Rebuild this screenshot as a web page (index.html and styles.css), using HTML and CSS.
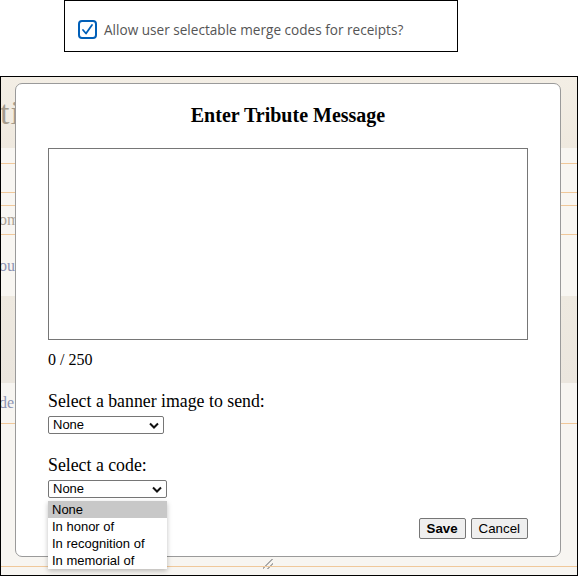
FILE: index.html
```html
<!DOCTYPE html>
<html>
<head>
<meta charset="utf-8">
<link rel="stylesheet" href="styles.css">
</head>
<body>
<div class="setting">
  <label class="setting-label">
    <span class="check">
      <svg width="19" height="19" viewBox="0 0 19 19"><rect x="1" y="1" width="17" height="17" rx="3" ry="3" fill="#fff" stroke="#005fb8" stroke-width="2"/><path d="M5 10 L8 13.5 L14 5" fill="none" stroke="#005fb8" stroke-width="1.8" stroke-linecap="round" stroke-linejoin="round"/></svg>
    </span>
    <span class="setting-text">Allow user selectable merge codes for receipts?</span>
  </label>
</div>

<div class="frame">
  <div class="page">
    <div class="band band-head"><span class="page-title">ti</span></div>
    <div class="band band-light">
      <div class="row r1"></div>
      <div class="row r2"></div>
      <div class="row r3"></div>
      <div class="row r4"><span class="ghost">om</span></div>
      <div class="row r5"><span class="ghost blue">out</span></div>
    </div>
    <div class="band band-mid"></div>
    <div class="band band-light2">
      <div class="row r6"><span class="ghost blue">de</span></div>
      <div class="spacer"></div>
      <div class="resizer"></div>
      <div class="row r7"></div>
    </div>
  </div>

  <div class="modal">
    <h2 class="modal-title">Enter Tribute Message</h2>
    <textarea class="message"></textarea>
    <div class="counter">0 / 250</div>
    <div class="field">
      <div class="field-label">Select a banner image to send:</div>
      <div class="select sel-banner">None<span class="chev"><svg width="10" height="7" viewBox="0 0 10 7"><path d="M1 1.5 L5 5.5 L9 1.5" fill="none" stroke="#111" stroke-width="2"/></svg></span></div>
    </div>
    <div class="field">
      <div class="field-label">Select a code:</div>
      <div class="select sel-code">None<span class="chev"><svg width="10" height="7" viewBox="0 0 10 7"><path d="M1 1.5 L5 5.5 L9 1.5" fill="none" stroke="#111" stroke-width="2"/></svg></span></div>
    </div>
    <div class="actions">
      <button class="btn btn-save">Save</button>
      <button class="btn">Cancel</button>
    </div>
    <ul class="dropdown">
      <li class="opt active">None</li>
      <li class="opt">In honor of</li>
      <li class="opt">In recognition of</li>
      <li class="opt">In memorial of</li>
    </ul>
  </div>
</div>
</body>
</html>
```

FILE: styles.css
```css
html, body {
  margin: 0;
  padding: 0;
  background: #fff;
}

.setting {
  margin-left: 64px;
  width: 379px;
  height: 50px;
  border: 1px solid #000;
  display: flex;
  align-items: center;
  padding-left: 13px;
  box-sizing: content-box;
}

.setting-label {
  display: flex;
  align-items: center;
  gap: 7px;
  padding-top: 7px;
}

.check {
  display: flex;
  width: 19px;
  height: 19px;
}

.setting-text {
  font-family: "Open Sans", "Noto Sans", sans-serif;
  font-size: 13.6px;
  color: #555;
}

.frame {
  position: relative;
  margin-top: 24px;
  width: 576px;
  height: 498px;
  border: 1px solid #000;
  overflow: hidden;
  background: #f7f4ef;
  font-family: "Liberation Serif", serif;
}

.page {
  display: flex;
  flex-direction: column;
  height: 100%;
}

.band-head {
  height: 71px;
  background: linear-gradient(180deg, #f3eee5 0%, #efe9df 100%);
  display: flex;
  align-items: center;
}

.page-title {
  font-size: 34px;
  color: #a59b8c;
  margin-left: -1px;
  letter-spacing: 1px;
}

.band-light {
  background: #f8f6f2;
  display: flex;
  flex-direction: column;
}

.row {
  border-bottom: 1px solid #f0c89a;
  display: flex;
  align-items: center;
}

.r1 { height: 15px; }
.r2 { height: 28px; }
.r3 { height: 12px; }
.r4 { height: 28px; }
.r5 { height: 61px; border-bottom: none; }

.ghost {
  font-size: 16px;
  color: #aaa297;
  margin-left: -2px;
}

.ghost.blue { color: #8b93b3; }

.band-mid {
  height: 87px;
  background: linear-gradient(180deg, #eee9e0 0%, #ebe6de 100%);
}

.band-light2 {
  background: #f7f5f1;
  display: flex;
  flex-direction: column;
  flex: 1;
}

.r6 { height: 40px; }
.spacer { flex: 1; }
.r7 { height: 0; margin-bottom: 8px; }

.resizer {
  width: 10px;
  height: 10px;
  margin-left: 262px;
  margin-bottom: -3px;
  background: linear-gradient(135deg, transparent 45%, #aaa 45%, #aaa 52%, transparent 52%, transparent 70%, #aaa 70%, #aaa 77%, transparent 77%);
}

.modal {
  position: absolute;
  left: 14px;
  top: 6px;
  width: 546px;
  height: 474px;
  background: #fff;
  border: 1px solid #9a9a9a;
  border-radius: 7px;
  box-sizing: border-box;
  padding: 0 32px 0 32px;
  display: flex;
  flex-direction: column;
}

.modal-title {
  margin: 20px 0 0;
  text-align: center;
  font-size: 20px;
  font-weight: bold;
  color: #000;
  height: 44px;
}

.message {
  display: block;
  width: 480px;
  height: 192px;
  margin: 0;
  border: 1px solid #767676;
  border-radius: 0;
  resize: none;
  box-sizing: border-box;
  padding: 2px;
}

.counter {
  margin-top: 10px;
  font-size: 16px;
  color: #000;
  line-height: 20px;
}

.field {
  margin-top: 21px;
  display: flex;
  flex-direction: column;
}

.field-label {
  font-size: 17.8px;
  line-height: 20px;
  color: #000;
  margin-bottom: 5px;
}

.select {
  position: relative;
  height: 18px;
  box-sizing: border-box;
  border: 1px solid #767676;
  border-radius: 2px;
  font-family: "Liberation Sans", Arial, sans-serif;
  font-size: 13px;
  line-height: 16px;
  padding-left: 4px;
  color: #000;
}

.sel-banner { width: 116px; }
.sel-code { width: 119px; }

.chev {
  position: absolute;
  right: 4px;
  top: 5px;
  display: flex;
}

.actions {
  margin-top: 20px;
  display: flex;
  justify-content: flex-end;
  gap: 5px;
}

.btn {
  font-family: "Liberation Sans", Arial, sans-serif;
  font-size: 13.3px;
  height: 21px;
  padding: 0 7px;
  background: #efefef;
  border: 1px solid #767676;
  border-radius: 2px;
  color: #000;
}

.btn-save { font-weight: bold; }

.dropdown {
  position: absolute;
  left: 32px;
  top: 417px;
  width: 119px;
  margin: 0;
  padding: 0;
  list-style: none;
  background: #fff;
  box-shadow: 0 2px 5px rgba(0,0,0,0.25);
  font-family: "Liberation Sans", Arial, sans-serif;
  font-size: 13px;
}

.opt {
  height: 17px;
  line-height: 17px;
  padding-left: 4px;
  color: #000;
}

.opt.active { background: #c8c8c8; }
```
